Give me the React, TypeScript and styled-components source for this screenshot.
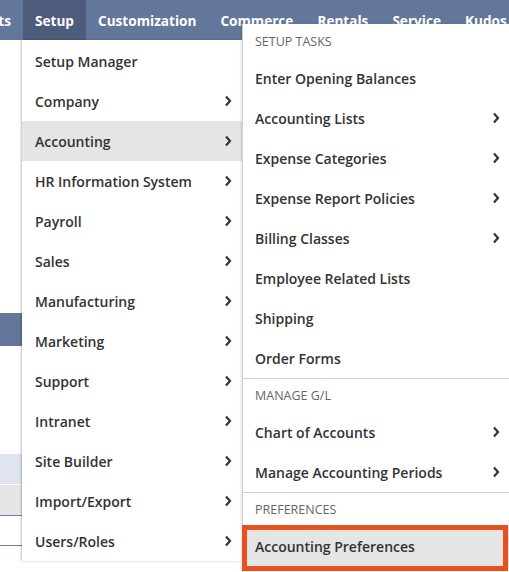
import React from "react";
import styled, { createGlobalStyle } from "styled-components";

const GlobalStyle = createGlobalStyle`
  html, body {
    margin: 0;
    padding: 0;
    background: #ffffff;
  }
  body {
    font-family: "Open Sans", "Liberation Sans", sans-serif;
  }
`;

type Entry =
  | { kind: "header"; label: string }
  | { kind: "item"; label: string; sub?: boolean; active?: boolean }
  | { kind: "sep" };

const navItems = ["Reports", "Setup", "Customization", "Commerce", "Rentals", "Service", "Kudos"];

const setupItems: { label: string; sub?: boolean; active?: boolean }[] = [
  { label: "Setup Manager" },
  { label: "Company", sub: true },
  { label: "Accounting", sub: true, active: true },
  { label: "HR Information System", sub: true },
  { label: "Payroll", sub: true },
  { label: "Sales", sub: true },
  { label: "Manufacturing", sub: true },
  { label: "Marketing", sub: true },
  { label: "Support", sub: true },
  { label: "Intranet", sub: true },
  { label: "Site Builder", sub: true },
  { label: "Import/Export", sub: true },
  { label: "Users/Roles", sub: true },
];

const accountingEntries: Entry[] = [
  { kind: "header", label: "Setup Tasks" },
  { kind: "item", label: "Enter Opening Balances" },
  { kind: "item", label: "Accounting Lists", sub: true },
  { kind: "item", label: "Expense Categories", sub: true },
  { kind: "item", label: "Expense Report Policies", sub: true },
  { kind: "item", label: "Billing Classes", sub: true },
  { kind: "item", label: "Employee Related Lists" },
  { kind: "item", label: "Shipping" },
  { kind: "item", label: "Order Forms" },
  { kind: "sep" },
  { kind: "header", label: "Manage G/L" },
  { kind: "item", label: "Chart of Accounts", sub: true },
  { kind: "item", label: "Manage Accounting Periods", sub: true },
  { kind: "sep" },
  { kind: "header", label: "Preferences" },
  { kind: "item", label: "Accounting Preferences", active: true },
];

function Chevron() {
  return (
    <ChevronSvg viewBox="0 0 8 12" width="8" height="12">
      <polyline points="2,1.5 6,6 2,10.5" fill="none" stroke="#333" strokeWidth="2.2" />
    </ChevronSvg>
  );
}

function App() {
  return (
    <Page>
      <GlobalStyle />
      <NavBar>
        {navItems.map((item, i) => (
          <NavTab key={item} $active={item === "Setup"} $clipped={i === 0}>
            {item}
          </NavTab>
        ))}
      </NavBar>

      <Content>
        <Spacer $h={273} />
        <BlueBand />
        <Spacer $h={108} />
        <PaleRow />
        <GreyRow />
        <RuleRow />
        <RuleRow />
      </Content>

      <SetupMenu>
        {setupItems.map(item => (
          <MenuItem key={item.label} $active={item.active}>
            <span>{item.label}</span>
            {item.sub && <Chevron />}
          </MenuItem>
        ))}
      </SetupMenu>

      <SubMenu>
        {accountingEntries.map((entry, i) => {
          if (entry.kind === "sep") return <Separator key={"sep" + i} />;
          if (entry.kind === "header") return <SectionHeader key={entry.label}>{entry.label}</SectionHeader>;
          return (
            <SubItem key={entry.label} $active={entry.active}>
              <span>{entry.label}</span>
              {entry.sub && <Chevron />}
            </SubItem>
          );
        })}
      </SubMenu>

      <Callout />
    </Page>
  );
}

const Page = styled.div`
  position: relative;
  width: 509px;
  height: 572px;
  overflow: hidden;
  background: #ffffff;
`;

const NavBar = styled.div`
  display: flex;
  height: 40px;
  background: #62779a;
`;

const NavTab = styled.div<{ $active?: boolean; $clipped?: boolean }>`
  display: flex;
  align-items: center;
  justify-content: ${p => (p.$clipped ? "flex-end" : "flex-start")};
  flex-shrink: 0;
  ${p => (p.$clipped ? "width: 11px; overflow: hidden;" : "")}
  padding: 0 12px 0 ${p => (p.$clipped ? "0" : "12px")};
  background: ${p => (p.$active ? "#4e5c7c" : "transparent")};
  color: #ffffff;
  font-size: 13.6px;
  font-weight: 700;
  white-space: nowrap;
`;

const Content = styled.div`
  display: flex;
  flex-direction: column;
  width: 22px;
`;

const Spacer = styled.div<{ $h: number }>`
  height: ${p => p.$h}px;
`;

const BlueBand = styled.div`
  height: 33px;
  background: #62779a;
`;

const PaleRow = styled.div`
  height: 30px;
  background: #dfe4ef;
  border-bottom: 1px solid #ffffff;
`;

const GreyRow = styled.div`
  height: 30px;
  background: #e6e6e6;
  border-bottom: 1px solid #6a7ea3;
`;

const RuleRow = styled.div`
  height: 29px;
  border-bottom: 1px solid #6a7ea3;
`;

const SetupMenu = styled.div`
  position: absolute;
  left: 22px;
  top: 40px;
  width: 220px;
  padding-top: 1px;
  background: #ffffff;
  box-shadow: -1px 0 2px rgba(0, 0, 0, 0.25);
`;

const MenuItem = styled.div<{ $active?: boolean }>`
  display: flex;
  align-items: center;
  justify-content: space-between;
  height: 40px;
  padding: 0 10px 0 13px;
  background: ${p => (p.$active ? "#e5e5e5" : "transparent")};
  color: #333333;
  font-size: 14px;
  font-weight: 600;
  white-space: nowrap;
`;

const SubMenu = styled.div`
  position: absolute;
  left: 242px;
  top: 24px;
  width: 267px;
  bottom: 0;
  background: #ffffff;
  border-left: 1px solid #cfcfcf;
  box-shadow: -1px 0 2px rgba(0, 0, 0, 0.12);
`;

const SectionHeader = styled.div`
  display: flex;
  align-items: center;
  height: 34px;
  padding-left: 12px;
  color: #666666;
  font-size: 12.5px;
  font-weight: 400;
  text-transform: uppercase;
`;

const SubItem = styled(MenuItem)`
  padding: 0 10px 0 12px;
`;

const Separator = styled.div`
  height: 1px;
  margin-bottom: -1px;
  background: #cfcfcf;
`;

const ChevronSvg = styled.svg`
  flex-shrink: 0;
`;

const Callout = styled.div`
  position: absolute;
  left: 242px;
  top: 525px;
  width: 256px;
  height: 36px;
  border: 5px solid #e8501f;
`;

export default App;
